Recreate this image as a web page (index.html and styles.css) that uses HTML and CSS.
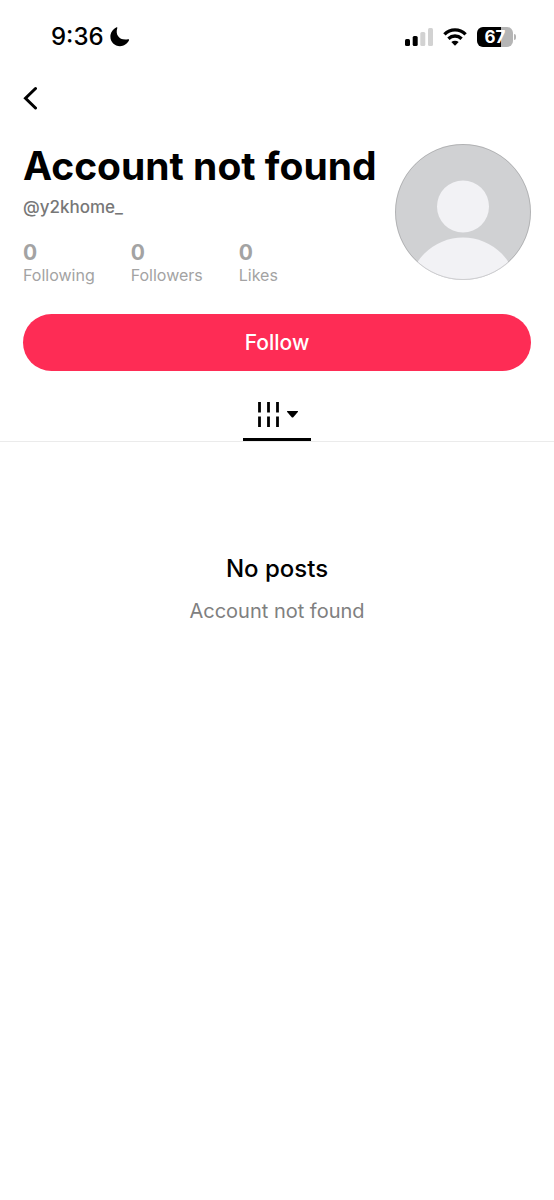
FILE: index.html
```html
<!DOCTYPE html>
<html lang="en">
<head>
<meta charset="utf-8">
<meta name="viewport" content="width=device-width, initial-scale=1">
<title>Account not found</title>
<link rel="stylesheet" href="styles.css">
</head>
<body>
<div class="status">
  <div class="status-group">
    <span class="time">9:36</span>
    <svg class="moon" width="20" height="20" viewBox="0 0 20 20" aria-hidden="true"><path d="M6.200 .6C7 0 7.600 .5 7.200 1.400C5.200 7.400 9.200 13.800 18 12.300C19 12.100 19.400 12.800 18.900 13.600C17.200 17 13.800 19.200 10 19.200C4.700 19.200 .4 15 .4 9.800C.4 6 2.600 2.500 6.200 .6Z"/></svg>
  </div>
  <div class="status-group status-right">
    <svg width="28" height="18" viewBox="0 0 28 18" aria-hidden="true"><rect y="11" width="5" height="7" rx="1.500"/><rect x="7.700" y="8" width="5" height="10" rx="1.500"/><g fill="#d2d2d2"><rect x="15.300" y="4" width="5" height="14" rx="1.500"/><rect x="23" y="0" width="5" height="18" rx="1.500"/></g></svg>
    <svg width="24" height="18" viewBox="0 0 24 18" aria-hidden="true"><g fill="none" stroke="#000" stroke-width="3.300"><path d="M1.400 6.300C7.400.3 16.600.3 22.600 6.300"/><path d="M5.400 10.700C9.200 7.100 14.800 7.100 18.600 10.700"/></g><path d="M12 17.800L8.300 14.100C10.500 12.400 13.500 12.400 15.700 14.100Z"/></svg>
    <div class="battery"><span class="battery-body">67</span><span class="battery-tip"></span></div>
  </div>
</div>
<main>
  <nav class="nav">
    <button class="back" aria-label="Back"><svg width="14" height="24" viewBox="0 0 14 24" aria-hidden="true"><path d="M12.500 2.500L2.500 12.200L12.500 22" fill="none" stroke="#000" stroke-width="3" stroke-linecap="round" stroke-linejoin="miter"/></svg></button>
  </nav>
  <header class="profile">
    <div class="info">
      <h1>Account not found</h1>
      <p class="handle">@y2khome_</p>
      <ul class="stats">
        <li><strong>0</strong><span>Following</span></li>
        <li><strong>0</strong><span>Followers</span></li>
        <li><strong>0</strong><span>Likes</span></li>
      </ul>
    </div>
    <svg class="avatar" viewBox="0 0 136 136" role="img" aria-label="Profile picture"><defs><clipPath id="round"><circle cx="68" cy="68" r="68"/></clipPath></defs><g clip-path="url(#round)"><rect width="136" height="136" fill="#d0d1d3"/><circle cx="68" cy="62.500" r="26" fill="#f2f2f5"/><circle cx="68" cy="148" r="54.500" fill="#f2f2f5"/></g><circle cx="68" cy="68" r="67.500" fill="none" stroke="#000" stroke-opacity=".15"/></svg>
  </header>
  <div class="action"><button class="follow">Follow</button></div>
  <div class="tabs" role="tablist">
    <button class="tab" role="tab" aria-selected="true" aria-label="Posts"><svg width="41" height="25" viewBox="0 0 41 25" aria-hidden="true"><path d="M2.500 0V10.500M11.500 0V10.500M20.500 0V10.500M2.500 14.500V25M11.500 14.500V25M20.500 14.500V25" stroke="#000" stroke-width="2.800"/><path d="M30.500 9H40.500Q41.500 9 40.800 10L36.500 15Q35.500 16 34.500 15L30.200 10Q29.500 9 30.500 9Z"/></svg></button>
  </div>
  <section class="empty">
    <h2>No posts</h2>
    <p>Account not found</p>
  </section>
</main>
</body>
</html>
```
FILE: styles.css
```css
* {
  box-sizing: border-box;
  margin: 0;
  padding: 0;
}

body {
  background: #fff;
  color: #000;
  font-family: Inter, "Liberation Sans", sans-serif;
}

button {
  border: 0;
  background: none;
  font: inherit;
  cursor: pointer;
}

svg {
  display: block;
  flex: none;
}

.status {
  display: flex;
  justify-content: space-between;
  align-items: center;
  height: 74px;
  padding: 0 38px 0 51px;
}

.status-group {
  display: flex;
  align-items: center;
  gap: 6px;
}

.status-right {
  gap: 10px;
}

.time {
  font-size: 24px;
  line-height: 28px;
  font-weight: 500;
}

.battery {
  display: flex;
  align-items: center;
  gap: 1px;
}

.battery-body {
  width: 36px;
  border-radius: 6px;
  background: linear-gradient(90deg, #000 67%, #b5b5b5 67%);
  color: #fff;
  font-size: 17px;
  line-height: 20px;
  font-weight: 700;
  text-align: center;
}

.battery-tip {
  width: 2px;
  height: 6px;
  border-radius: 0 2px 2px 0;
  background: #b5b5b5;
}

.nav {
  display: flex;
  align-items: center;
  height: 48px;
  padding: 0 23px;
}

.profile {
  display: flex;
  justify-content: space-between;
  padding: 22px 23px 0;
}

.info {
  flex: 1;
  min-width: 0;
}

h1 {
  font-size: 39px;
  line-height: 44px;
  font-weight: 700;
  white-space: nowrap;
}

.handle {
  margin-top: 8px;
  color: #777;
  font-size: 17px;
  line-height: 22px;
  font-weight: 500;
}

.stats {
  display: flex;
  gap: 36px;
  margin-top: 24px;
  color: #a3a3a3;
  list-style: none;
}

.stats li {
  display: flex;
  flex-direction: column;
}

.stats strong {
  font-size: 21px;
  line-height: 22px;
  font-weight: 700;
}

.stats span {
  font-size: 16px;
  line-height: 22px;
}

.avatar {
  width: 136px;
  height: 136px;
}

.action {
  padding: 28px 23px 0;
}

.info + .avatar {
  margin-bottom: 6px;
}

.follow {
  display: block;
  width: 100%;
  height: 57px;
  border-radius: 29px;
  background: #fe2c55;
  color: #fff;
  font-size: 21px;
  font-weight: 500;
}

.tabs {
  display: flex;
  justify-content: center;
  height: 71px;
  border-bottom: 1px solid #ebebeb;
}

.tab {
  display: flex;
  justify-content: center;
  width: 68px;
  height: 70px;
  padding-top: 31px;
  border-bottom: 3px solid #000;
}

.empty {
  padding: 111px 23px 0;
  text-align: center;
}

.empty h2 {
  font-size: 24px;
  line-height: 32px;
  font-weight: 500;
}

.empty p {
  margin-top: 12px;
  color: #808080;
  font-size: 20px;
  line-height: 28px;
}
```
